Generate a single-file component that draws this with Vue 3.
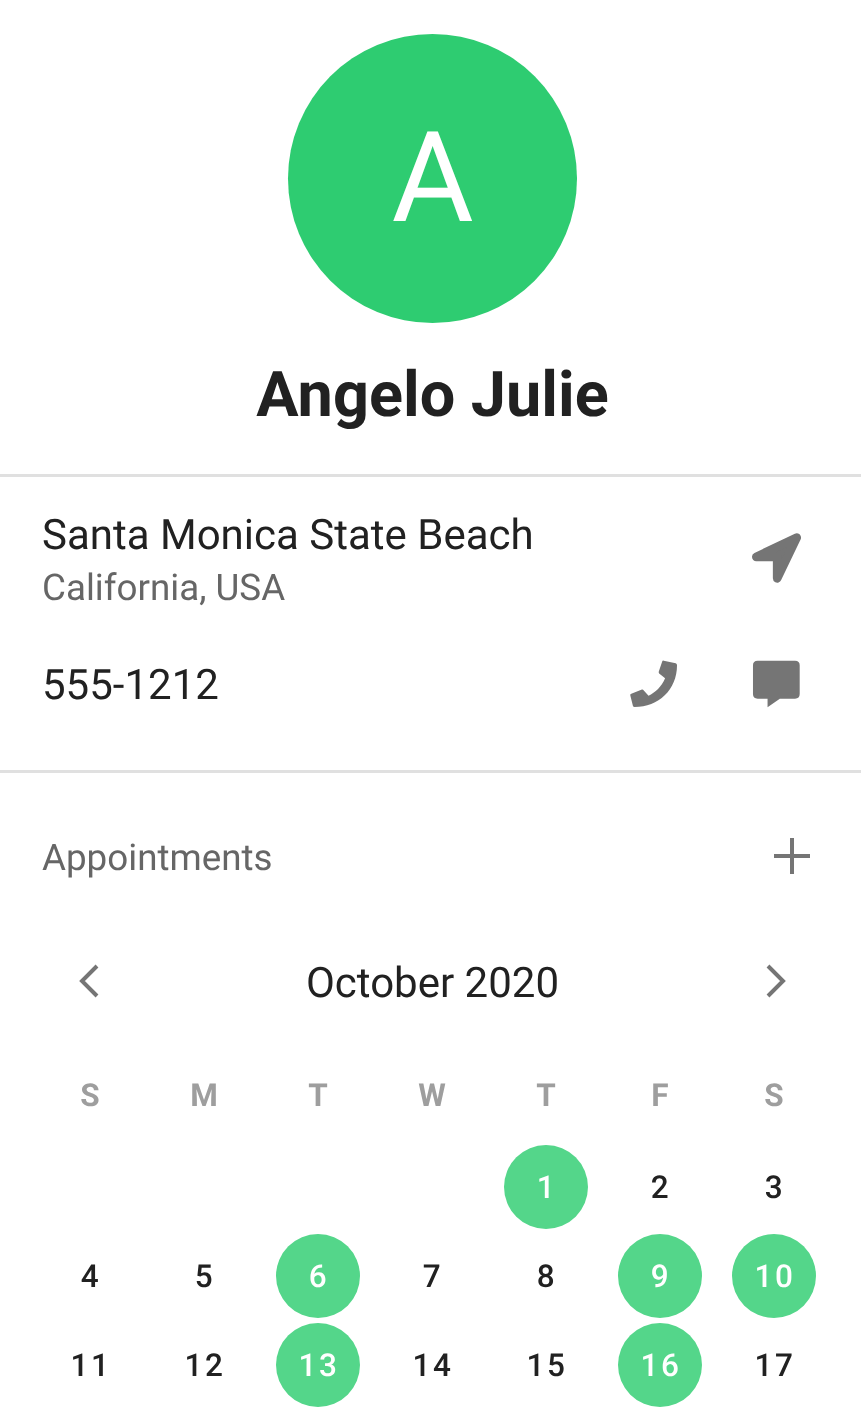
<script setup>
const weekdays = ['S', 'M', 'T', 'W', 'T', 'F', 'S']
const marked = [1, 6, 9, 10, 13, 16]
const blanks = [0, 1, 2, 3]
const days = Array.from({ length: 17 }, (_, i) => i + 1)
</script>

<template>
  <div class="page">
    <header class="profile">
      <div class="avatar">A</div>
      <h1 class="name">Angelo Julie</h1>
    </header>

    <section class="contact">
      <div class="row address">
        <div class="lines">
          <div class="primary">Santa Monica State Beach</div>
          <div class="secondary">California, USA</div>
        </div>
        <svg class="icon nav" viewBox="450 60 160 160" width="53" height="53">
          <polygon points="469,138 591,80 532,203 532,138" fill="#757575" stroke="#757575" stroke-width="26" stroke-linejoin="round" />
        </svg>
      </div>
      <div class="row phone">
        <div class="primary number">555-1212</div>
        <div class="actions">
          <svg class="icon" viewBox="80 445 160 155" width="53" height="52">
            <path fill="#757575" d="M191 452 L227 460 Q231 461 231 466 C231 540 175 592 103 592 Q99 592 98 589 L90 557 Q89 553 93 552 L125 539 Q128 538 130 541 L145 558 C165 548 185 530 195 505 L177 491 Q175 488 176 485 L186 455 Q187 451 191 452Z" />
          </svg>
          <svg class="icon" viewBox="450 445 160 155" width="53" height="52">
            <path fill="#757575" d="M473 452 H586 Q600 452 600 466 V553 Q600 567 586 567 H540 L503 593 V567 H473 Q459 567 459 553 V466 Q459 452 473 452Z" />
          </svg>
        </div>
      </div>
    </section>

    <section class="appointments">
      <div class="appt-head">
        <span class="secondary appt-title">Appointments</span>
        <svg class="plus" viewBox="0 0 36 36" width="36" height="36">
          <path d="M18 0V36M0 18H36" stroke="#757575" stroke-width="4" fill="none" />
        </svg>
      </div>

      <div class="month">
        <svg viewBox="0 0 22 34" width="22" height="34">
          <path d="M19 2L4 17L19 32" stroke="#757575" stroke-width="4" fill="none" />
        </svg>
        <span class="month-name">October 2020</span>
        <svg viewBox="0 0 22 34" width="22" height="34">
          <path d="M3 2L18 17L3 32" stroke="#757575" stroke-width="4" fill="none" />
        </svg>
      </div>

      <div class="grid weekdays">
        <div v-for="(d, i) in weekdays" :key="i" class="weekday">{{ d }}</div>
      </div>
      <div class="grid days">
        <div v-for="b in blanks" :key="'b' + b" class="cell"></div>
        <div v-for="d in days" :key="d" class="cell">
          <span class="day" :class="{ marked: marked.includes(d) }">{{ d }}</span>
        </div>
      </div>
    </section>
  </div>
</template>

<style scoped>
.page {
  width: 861px;
  height: 1414px;
  overflow: hidden;
  font-family: Roboto, "Liberation Sans", sans-serif;
  color: #212121;
  will-change: transform;
  text-rendering: geometricPrecision;
}
.profile {
  display: flex;
  flex-direction: column;
  align-items: center;
  padding: 34px 0 0 4px;
  height: 440px;
  border-bottom: 3px solid #e0e0e0;
  box-sizing: content-box;
}
.avatar {
  width: 289px;
  height: 289px;
  border-radius: 50%;
  background: #2ecc71;
  color: #fff;
  font-size: 126px;
  line-height: 289px;
  text-align: center;
}
.name {
  margin: 36px 0 0;
  font-size: 63px;
  line-height: 74px;
  font-weight: 700;
}
.contact {
  height: 293px;
  border-bottom: 3px solid #e0e0e0;
  padding: 0 58px 0 42px;
}
.row {
  display: flex;
  justify-content: space-between;
  align-items: center;
}
.address {
  height: 154px;
  padding-top: 10px;
  box-sizing: border-box;
}
.lines {
  display: flex;
  flex-direction: column;
  padding-top: 8px;
}
.primary {
  font-size: 42px;
  line-height: 50px;
}
.secondary {
  font-size: 36.75px;
  line-height: 50px;
  color: #666;
}
.lines .secondary {
  line-height: 54px;
}
.icon {
  display: block;
}
.nav {
  margin: -4px 0 0 0;
}
.phone {
  height: 70px;
  margin-top: 18px;
}
.number {
  padding-top: 4px;
}
.actions {
  display: flex;
  gap: 70px;
}
.appointments {
  padding: 0 30px;
}
.appt-head {
  display: flex;
  justify-content: space-between;
  align-items: center;
  height: 60px;
  margin-top: 54px;
  padding: 0 21px 0 12px;
}
.appt-title {
  position: relative;
  top: 1px;
}
.plus {
  margin-top: -3px;
}
.month {
  display: flex;
  justify-content: space-between;
  align-items: center;
  height: 60px;
  margin-top: 64px;
  padding: 0 44px 0 48px;
}
.month-name {
  font-size: 42px;
  line-height: 50px;
  position: relative;
  top: 3px;
}
.grid {
  display: grid;
  grid-template-columns: repeat(7, 114px);
  margin-left: 3px;
}
.weekdays {
  margin-top: 55px;
}
.weekday {
  height: 60px;
  line-height: 60px;
  text-align: center;
  font-size: 31.5px;
  font-weight: 700;
  color: #9e9e9e;
}
.days {
  grid-auto-rows: 89px;
  margin-top: 16px;
}
.cell {
  display: flex;
  justify-content: center;
  align-items: center;
}
.day {
  width: 84px;
  height: 84px;
  border-radius: 50%;
  display: flex;
  justify-content: center;
  align-items: center;
  padding: 2px 0 0 2px;
  box-sizing: border-box;
  font-size: 31.5px;
  font-weight: 500;
  letter-spacing: 2.6px;
  color: #212121;
}
.day.marked {
  background: #54d68a;
  color: #fff;
}
</style>
